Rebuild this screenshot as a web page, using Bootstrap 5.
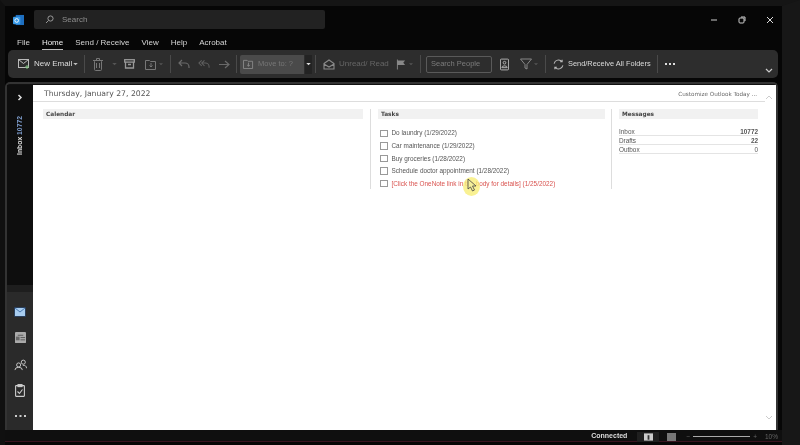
<!DOCTYPE html>
<html lang="en">
<head>
<meta charset="utf-8">
<title>Outlook Today</title>
<link href="https://cdn.jsdelivr.net/npm/bootstrap@5.3.0/dist/css/bootstrap.min.css" rel="stylesheet">
<style>
html,body{height:445px;overflow:hidden;background:#0b0b0b}
body{font-family:"Liberation Sans",sans-serif;color:#ddd}
.shell{width:800px;height:445px;border-top:6px solid #151515;border-right:18px solid #171717;border-left:5px solid #101010;background:#060606;filter:blur(.35px)}
.shell svg,.ribbon>*{flex:none}
.ml1{margin-left:1px}.ml2{margin-left:2px}.ml3{margin-left:3px}.ml4{margin-left:4px}.ml5{margin-left:5px}.ml6{margin-left:6px}.ml7{margin-left:7px}.ml8{margin-left:8px}.ml9{margin-left:9px}.ml10{margin-left:10px}.ml11{margin-left:11px}
.titlebar{height:27px;padding:4px 0 0 8px}
.outlogo{margin-top:4px}
.searchbox{width:291px;height:19px;background:#222;border-radius:2px;margin-left:10px;padding-left:11px;font-size:8px;color:#8d8d8d}
.searchbox span{margin-left:8px}
.winbtns{gap:20px;margin-right:8px;height:19px}
.tabs{height:17px;padding-left:12px;gap:12px;font-size:8px;color:#d4d4d4;padding-top:2px}
.tabs .on{color:#eee;border-bottom:1px solid #bbb;height:14px;line-height:13px;margin-top:1px}
.ribbon{height:28px;margin:0 4px 0 3px;background:#2d2d2d;border-radius:5px;padding:0 0 0 10px;font-size:8px;color:#ddd;position:relative;white-space:nowrap}
.sep{width:1px;height:18px;background:#4a4a4a}
.tnew{width:35px}
.tunread{width:47px;color:#666}
.tsend{width:82px;font-size:7.400px}
.moveto{width:64px;height:19px;background:#4a4a4a;border-radius:2px 0 0 2px;padding-left:3px;font-size:7.500px;color:#777}
.movedrop{width:7px;height:19px;background:#232323;color:#ddd}
.people{width:66px;height:17px;border:1px solid #5a5a5a;border-radius:2px;padding-left:4px;font-size:7.500px;color:#7c7c7c}
.collapse-ic{position:absolute;right:5px;bottom:5px}
.mainframe{height:348px;margin:4px 4px 0 0;border:2px solid #333;border-bottom:0;border-radius:5px 5px 0 0;padding-top:1px;background:#111}
.rail{width:26px;background:#0e0e0e}
.railtop{height:200px;padding-top:9px}
.vtext{writing-mode:vertical-rl;transform:rotate(180deg);font-size:6.800px;font-weight:700;margin-top:15px;color:#ddd;white-space:nowrap}
.vtext b{color:#7d9ccc;margin-left:2px}
.railbot{background:#2a2a2a;border-top:7px solid #1e1e1e;padding-top:7px;height:145px}
.railbtn{height:26px}
.page{background:#fff;color:#444;font-family:"DejaVu Sans",sans-serif;position:relative;min-width:0}
.pagehead{height:17px;margin:0 11px 0 0;border-bottom:1px solid #ddd;padding-left:11px}
.datehead{font-size:7.700px;color:#555;padding-top:1px}
.custom{font-size:5.650px;color:#666;margin-right:8px;padding-top:3px}
.cols{padding:7px 0 0 10px}
.colcal{width:320px}
.coltask{width:235px;margin-left:7px;border-left:1px solid #ddd;padding-left:7px;height:80px}
.colmsg{width:147px;margin-left:6px;border-left:1px solid #ddd;padding-left:7px;height:80px}
.colhead{height:10px;line-height:10px;background:#f1f1f1;font-size:5.800px;font-weight:700;color:#444;padding-left:3px}
.taskrow{height:12.600px;font-size:6.400px;color:#555;padding-left:2px;gap:4px;font-family:"Liberation Sans",sans-serif;white-space:nowrap}
.tick{width:7.500px;height:7.500px;border:1px solid #999;flex:none}
.taskred{color:#d9534f}
.msgrow{height:9px;line-height:9px;border-bottom:1px solid #e4e4e4;font-size:6.400px;color:#555;font-family:"Liberation Sans",sans-serif}
.hilite{position:absolute;left:430px;top:92px;width:17px;height:19px;border-radius:50%;background:#f8ee78;opacity:.8}
.pointer{position:absolute;left:434px;top:93px}
.scrollup{position:absolute;right:3px;top:10px}
.scrolldown{position:absolute;right:3px;bottom:10px}
.statusbar{height:12px;background:#0f0f0f;font-size:7px;font-weight:700;color:#ddd;padding:2px 4px 0 0;border-bottom:1px solid #3a1420}
.zoomtrack{width:57px;height:1px;background:#aaa}
.statzoom{font-size:6.500px;color:#666;font-weight:400}
.viewon{width:22px;height:10px;background:#1f1f1f}
</style>
</head>
<body>
<div class="shell d-flex flex-column">
  <div class="titlebar d-flex">
    <svg class="outlogo" width="11" height="12" viewBox="0 0 12 13"><rect x="3" y="1" width="9" height="11" fill="#1e6fc0"/><rect x="0" y="3" width="8" height="8" rx="1" fill="#3a9be8"/><circle cx="4" cy="7" r="2" fill="none" stroke="#fff"/></svg>
    <div class="searchbox d-flex align-items-center">
      <svg width="9" height="9" viewBox="0 0 9 9" fill="none" stroke="#999"><circle cx="5.500" cy="3.500" r="2.600"/><path d="M3.500 5.500L1 8"/></svg>
      <span>Search</span>
    </div>
    <div class="winbtns d-flex align-items-center ms-auto">
      <svg width="8" height="8" viewBox="0 0 8 8" stroke="#ccc"><path d="M1 4h6"/></svg>
      <svg width="8" height="8" viewBox="0 0 8 8" fill="none" stroke="#ccc"><rect x="1" y="2" width="5" height="5" rx="1"/><path d="M3 1h4v4"/></svg>
      <svg width="8" height="8" viewBox="0 0 8 8" stroke="#ddd"><path d="M1 1l6 6M7 1L1 7"/></svg>
    </div>
  </div>
  <div class="tabs d-flex align-items-center">
    <span>File</span><span class="on">Home</span><span>Send / Receive</span><span>View</span><span>Help</span><span>Acrobat</span>
  </div>
  <div class="ribbon d-flex align-items-center">
    <svg width="12" height="10" viewBox="0 0 12 10" fill="none" stroke="#bbb"><rect x=".5" y=".5" width="10" height="8"/><path d="M.5 .5l5 4 5-4"/><path d="M9 6v4M7 8h4" stroke="#7fbf7f"/></svg>
    <span class="tnew ml4">New Email</span>
    <svg width="5" height="3" class="ml4" viewBox="0 0 6 4" fill="#bbb"><path d="M0 0h6L3 3z"/></svg>
    <div class="sep ml6"></div>
    <svg width="10" height="13" class="ml8" viewBox="0 0 10 13" fill="none" stroke="#777"><rect x="1.500" y="2.500" width="7" height="10" rx="1"/><path d="M0 2.500h10M3.500 2V.5h3V2M3.500 5v5M6.500 5v5"/></svg>
    <svg width="5" height="3" class="ml9" viewBox="0 0 6 4" fill="#555"><path d="M0 0h6L3 3z"/></svg>
    <svg width="11" height="10" class="ml7" viewBox="0 0 11 10" fill="none" stroke="#999" stroke-width="1.300"><rect x=".7" y=".7" width="9.600" height="2.400"/><path d="M1.500 3v6h8V3M4 5.500h3"/></svg>
    <svg width="12" height="11" class="ml10" viewBox="0 0 12 11" fill="none" stroke="#777"><path d="M.5 1.500h4l1 1h5v8h-10z"/><path d="M6 4v4M4.500 6.500L6 8l1.500-1.500"/></svg>
    <svg width="4" height="3" class="ml2" viewBox="0 0 6 4" fill="#555"><path d="M0 0h6L3 3z"/></svg>
    <div class="sep ml7"></div>
    <svg width="12" height="10" class="ml7" viewBox="0 0 12 10" fill="none" stroke="#6a6a6a" stroke-width="1.200"><path d="M4 1L1 4l3 3M1 4h6a4 4 0 0 1 4 4v1"/></svg>
    <svg width="12" height="10" class="ml8" viewBox="0 0 13 10" fill="none" stroke="#5f5f5f" stroke-width="1.100"><path d="M4 1L1 4l3 3M7 1L4 4l3 3M4 4h4a4 4 0 0 1 4 4v1"/></svg>
    <svg width="12" height="9" class="ml8" viewBox="0 0 12 9" fill="none" stroke="#6a6a6a" stroke-width="1.200"><path d="M7 1l4 3.500L7 8M1 4.500h10"/></svg>
    <div class="sep ml6"></div>
    <div class="moveto d-flex align-items-center ml3">
      <svg width="11" height="10" class="me-1" viewBox="0 0 12 11" fill="none" stroke="#888"><path d="M.5 1.500h4l1 1h5v8h-10z"/><path d="M6 4v4M4.500 6.500L6 8l1.500-1.500"/></svg>
      <span>Move to: ?</span>
    </div>
    <div class="movedrop d-flex align-items-center justify-content-center ml1"><svg width="5" height="3" viewBox="0 0 6 4" fill="#ddd"><path d="M0 0h6L3 3z"/></svg></div>
    <div class="sep ml3"></div>
    <svg width="12" height="11" class="ml7" viewBox="0 0 12 11" fill="none" stroke="#8a8a8a" stroke-width="1.100"><path d="M1 4.500L6 1l5 3.500V10H1zM1 5l5 3 5-3"/></svg>
    <span class="tunread ml4">Unread/ Read</span>
    <svg width="10" height="11" class="ml10" viewBox="0 0 11 11" fill="#888"><path d="M1 0h1v11H1zM2 1h8L8 3.500 10 6H2z"/></svg>
    <svg width="4" height="3" class="ml3" viewBox="0 0 6 4" fill="#555"><path d="M0 0h6L3 3z"/></svg>
    <div class="sep ml7"></div>
    <div class="people d-flex align-items-center ml5">Search People</div>
    <svg width="9" height="13" class="ml8" viewBox="0 0 10 13" fill="none" stroke="#bbb"><rect x=".5" y=".5" width="9" height="12" rx="1"/><circle cx="5" cy="4.500" r="1.500"/><path d="M2 10a3 2 0 0 1 6 0z"/></svg>
    <svg width="12" height="12" class="ml11" viewBox="0 0 12 12" fill="none" stroke="#888"><path d="M.5 1h11L7 6.500V11L5 10V6.500z"/></svg>
    <svg width="4" height="3" class="ml2" viewBox="0 0 6 4" fill="#555"><path d="M0 0h6L3 3z"/></svg>
    <div class="sep ml7"></div>
    <svg width="11" height="11" class="ml7" viewBox="0 0 12 12" fill="none" stroke="#bbb" stroke-width="1.100"><path d="M1.200 5A5 5 0 0 1 10 3M10.800 7A5 5 0 0 1 2 9M10 .8V3H7.800M2 11.200V9h2.200"/></svg>
    <span class="tsend ml4">Send/Receive All Folders</span>
    <div class="sep ml7"></div>
    <svg width="10" height="2" class="ml7" viewBox="0 0 10 2" fill="#ddd"><rect width="2" height="2"/><rect x="4" width="2" height="2"/><rect x="8" width="2" height="2"/></svg>
    <svg class="collapse-ic" width="8" height="5" viewBox="0 0 8 5" fill="none" stroke="#ccc" stroke-width="1.200"><path d="M1 1l3 3 3-3"/></svg>
  </div>
  <div class="mainframe d-flex">
    <div class="rail d-flex flex-column flex-shrink-0">
      <div class="railtop d-flex flex-column align-items-center">
        <svg width="6" height="7" viewBox="0 0 6 7" fill="none" stroke="#ddd" stroke-width="1.500"><path d="M1.500 1l2.500 2.500L1.500 6"/></svg>
        <div class="vtext">Inbox <b>10772</b></div>
      </div>
      <div class="railbot d-flex flex-column">
        <div class="railbtn d-flex align-items-center justify-content-center"><svg width="12" height="10" viewBox="0 0 12 10"><rect width="12" height="10" rx="1" fill="#2a3f5c"/><rect x="1" y="1" width="10" height="8" fill="#a8cdf0"/><path d="M1 1l5 4 5-4" fill="none" stroke="#4a79b0"/></svg></div>
        <div class="railbtn d-flex align-items-center justify-content-center"><svg width="11" height="12" viewBox="0 0 12 13"><rect width="12" height="12" rx="1" fill="#aaa"/><path d="M3 3.500h6M6 6h5M6 8.500h5" stroke="#555"/><rect x="1" y="5" width="4" height="4" fill="#666"/></svg></div>
        <div class="railbtn d-flex align-items-center justify-content-center"><svg width="13" height="13" viewBox="0 0 14 13" fill="none" stroke="#ccc"><circle cx="10" cy="4" r="2.200"/><circle cx="5" cy="7" r="2.200"/><path d="M1 12.500a4 3 0 0 1 8 0M9.500 7.500a3 3 0 0 1 4 3"/></svg></div>
        <div class="railbtn d-flex align-items-center justify-content-center"><svg width="10" height="13" viewBox="0 0 10 13" fill="none" stroke="#ccc" stroke-width="1.100"><rect x=".6" y="1.600" width="8.800" height="10.800" rx=".6"/><rect x="3" y=".6" width="4" height="2" fill="#ccc"/><path d="M2.500 7.500l2 2 3-4"/></svg></div>
        <div class="railbtn d-flex align-items-center justify-content-center"><svg width="13" height="2" viewBox="0 0 13 2" fill="#ccc"><rect x="1" width="2" height="2"/><rect x="5.500" width="2" height="2"/><rect x="10" width="2" height="2"/></svg></div>
      </div>
    </div>
    <div class="page flex-grow-1">
      <div class="pagehead d-flex align-items-center justify-content-between">
        <span class="datehead">Thursday, January 27, 2022</span>
        <span class="custom">Customize Outlook Today ...</span>
      </div>
      <div class="cols d-flex">
        <div class="colcal"><div class="colhead">Calendar</div></div>
        <div class="coltask">
          <div class="colhead mb-2">Tasks</div>
          <div class="taskrow d-flex align-items-center"><span class="tick"></span>Do laundry (1/29/2022)</div>
          <div class="taskrow d-flex align-items-center"><span class="tick"></span>Car maintenance (1/29/2022)</div>
          <div class="taskrow d-flex align-items-center"><span class="tick"></span>Buy groceries (1/28/2022)</div>
          <div class="taskrow d-flex align-items-center"><span class="tick"></span>Schedule doctor appointment (1/28/2022)</div>
          <div class="taskrow taskred d-flex align-items-center"><span class="tick"></span>[Click the OneNote link in the body for details] (1/25/2022)</div>
        </div>
        <div class="colmsg">
          <div class="colhead mb-2">Messages</div>
          <div class="msgrow d-flex justify-content-between"><span>Inbox</span><b>10772</b></div>
          <div class="msgrow d-flex justify-content-between"><span>Drafts</span><b>22</b></div>
          <div class="msgrow d-flex justify-content-between"><span>Outbox</span><span>0</span></div>
        </div>
      </div>
      <div class="hilite"></div>
      <svg class="pointer" width="10" height="14" viewBox="0 0 10 14"><path d="M1 1v10l2.500-2 2 4 2-1-2-4H9z" fill="#f4ef9a" stroke="#444" stroke-width=".8"/></svg>
      <svg class="scrollup" width="8" height="5" viewBox="0 0 8 5" fill="none" stroke="#ccc"><path d="M1 4l3-3 3 3"/></svg>
      <svg class="scrolldown" width="8" height="5" viewBox="0 0 8 5" fill="none" stroke="#ccc"><path d="M1 1l3 3 3-3"/></svg>
    </div>
  </div>
  <div class="statusbar d-flex align-items-center justify-content-end">
    <span>Connected</span>
    <div class="viewon d-flex align-items-center justify-content-center ml10"><svg width="9" height="8" viewBox="0 0 10 8"><rect width="10" height="8" fill="#ccc"/><rect x="4" y="2" width="2" height="5" fill="#333"/></svg></div>
    <svg width="9" height="8" class="ml8" viewBox="0 0 9 8"><rect width="9" height="8" fill="#777"/></svg>
    <span class="statzoom ml10">−</span><span class="zoomtrack ml3"></span><span class="statzoom ml3">+</span>
    <span class="statzoom ml8">10%</span>
  </div>
</div>
<script src="https://cdn.jsdelivr.net/npm/bootstrap@5.3.0/dist/js/bootstrap.bundle.min.js"></script>
</body>
</html>
